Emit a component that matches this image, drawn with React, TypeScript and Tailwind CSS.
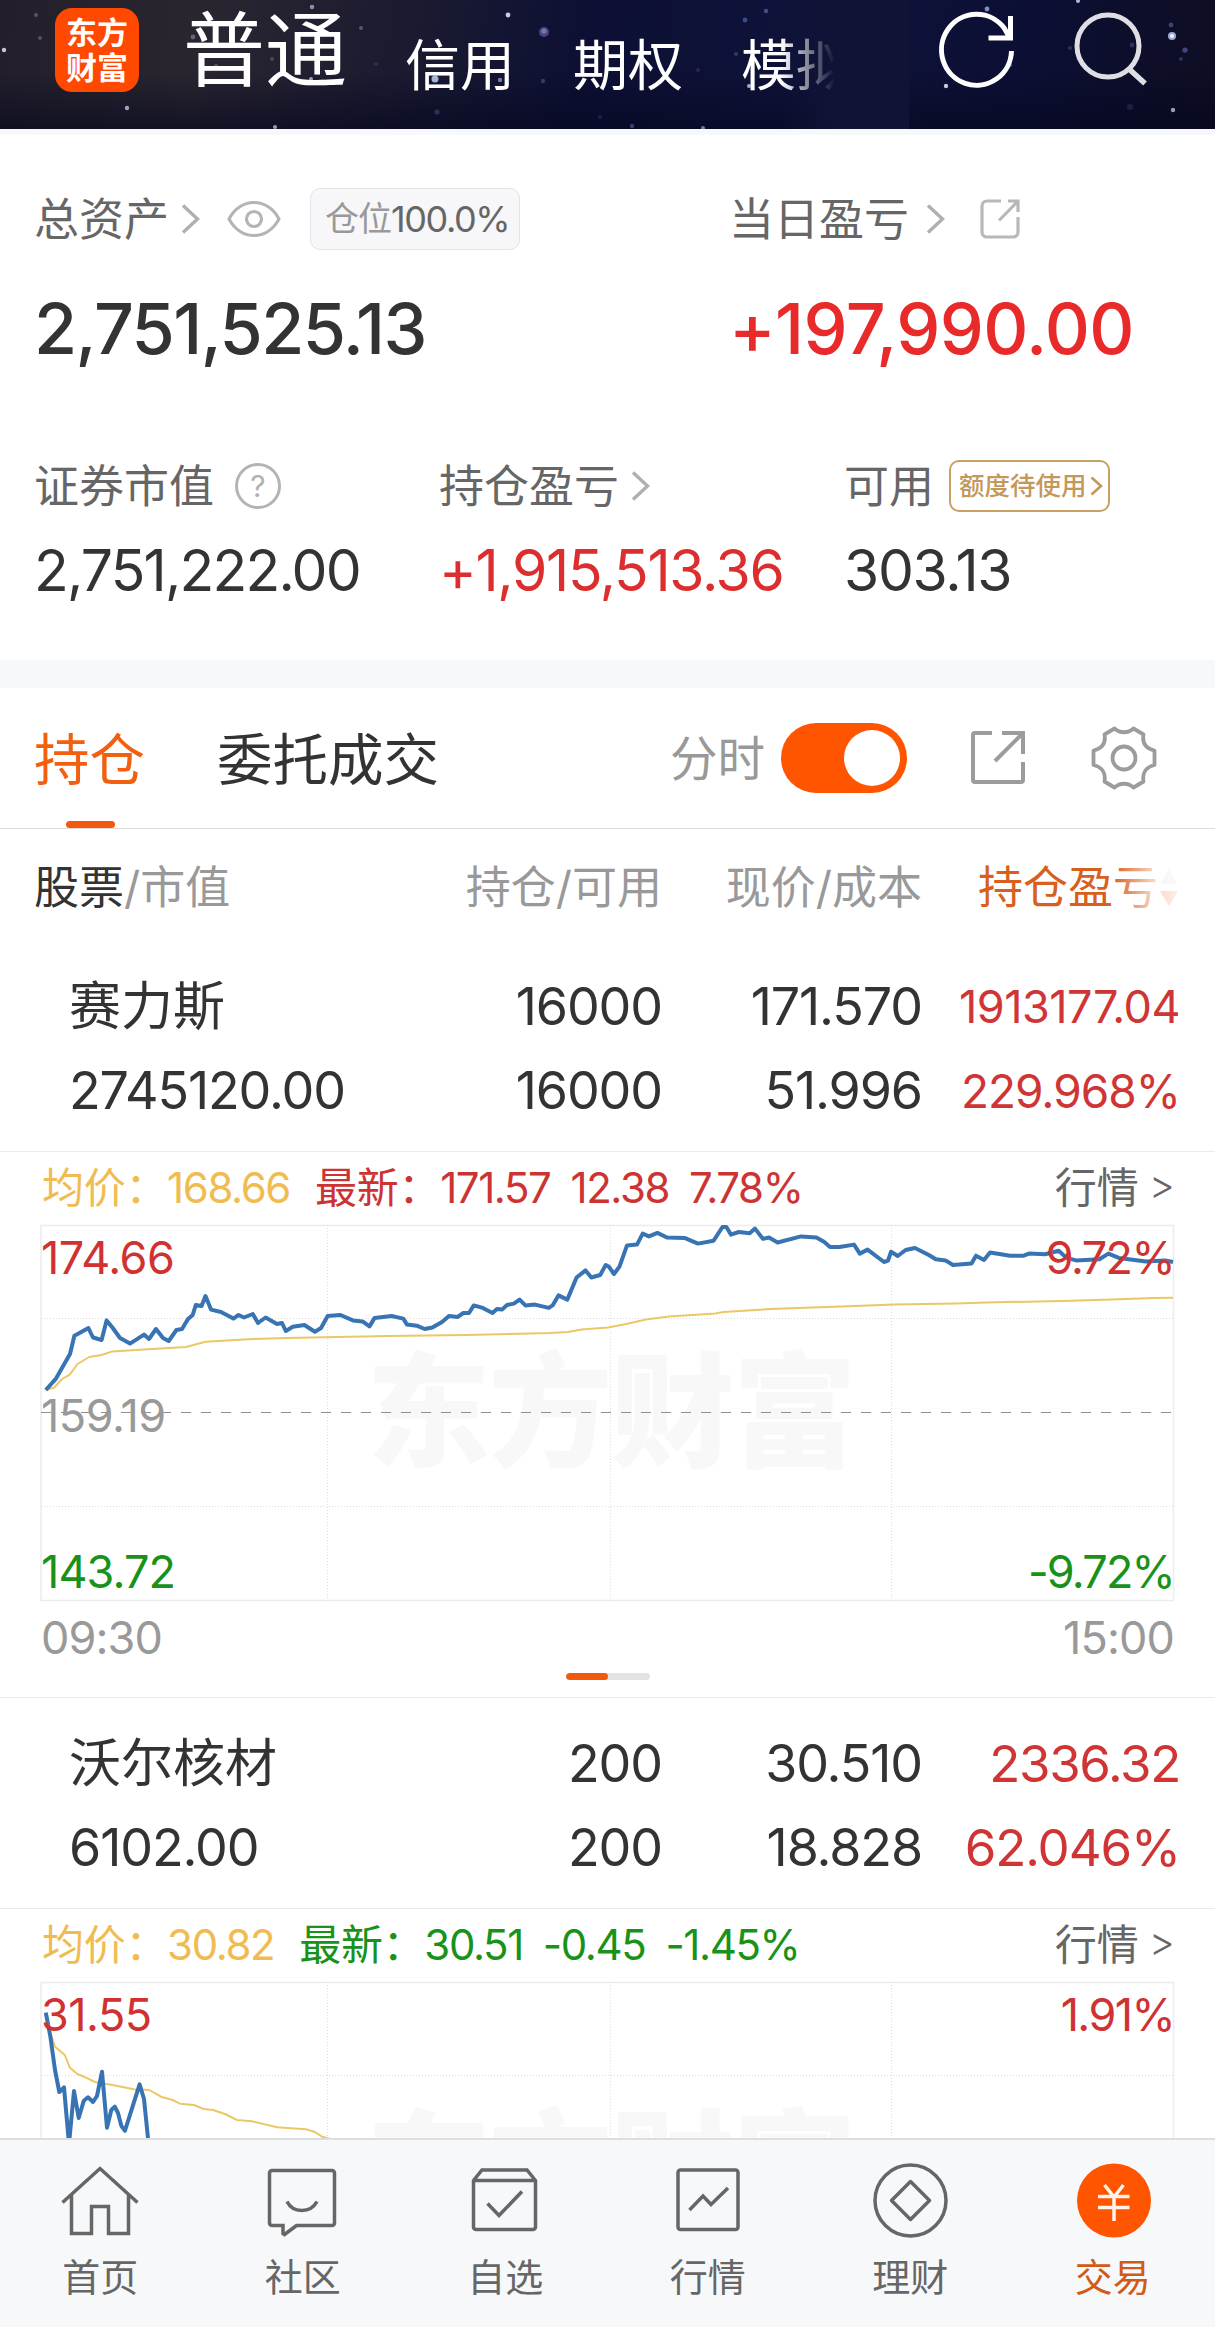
import React from 'react';

type Point = [number, number];

const STARS: [number, number, number, string][] = [
  [312, 7, 2.2, '#b79ac0'], [508, 15, 2.4, '#e8edff'], [544, 32, 5, '#5b4a8c'], [544, 31, 2.6, '#8a78bd'],
  [361, 28, 2, '#6d5b78'], [4, 50, 2.2, '#dfe4f5'], [36, 15, 2, '#5b5f80'], [40, 38, 2, '#55587a'],
  [127, 108, 2.2, '#a9bde8'], [275, 127, 2, '#b9b4b4'], [272, 59, 2, '#5a4a6a'], [435, 79, 3.5, '#bcd0f5'],
  [500, 80, 2.2, '#8190c4'], [376, 64, 2, '#2d3163'], [543, 81, 2.2, '#3c3f75'], [437, 112, 2.6, '#2b3566'],
  [311, 79, 2, '#b9b9cf'], [193, 37, 2.4, '#7a6b88'], [216, 66, 2, '#6f5775'], [766, 11, 2.2, '#4a5a98'],
  [745, 20, 2.4, '#3c5a9c'], [736, 54, 2, '#3b3d78'], [749, 86, 2, '#b7c8ee'], [698, 70, 2, '#282b60'],
  [632, 126, 2.2, '#3b4a7d'], [703, 128, 2, '#8d8f9c'], [987, 9, 2.4, '#8ea5e0'], [946, 86, 2.2, '#e4eaff'],
  [1078, 1, 2, '#c9d4ff'], [1010, 65, 2, '#4b6bb0'], [1172, 36, 4, '#b9c4f5'], [1172, 36, 2, '#ffffff'],
  [1171, 25, 2.4, '#474b80'], [1185, 50, 2.6, '#4e5290'], [1181, 59, 2, '#35386c'], [1173, 110, 2.2, '#b6bac4'],
  [1130, 107, 3, '#1c2550'], [1070, 48, 2, '#34376e'], [1132, 45, 2.4, '#3a3568'], [600, 117, 2, '#1d2756'],
];

const PRICE_1: Point[] = [
  [4.8, 165], [15, 153.6], [29, 129], [33.4, 110.7], [38.5, 108], [47.4, 103], [52, 112.5], [60.6, 115], [65.6, 95.4],
  [71.4, 102.5], [79, 113], [89, 118.6], [103, 109.6], [108, 114], [115, 104], [122, 113], [127.7, 116], [135.4, 105],
  [141, 104], [147, 94], [151.7, 90], [154.8, 80], [160.6, 81], [164.5, 71], [170, 84.6], [180, 87], [192.4, 93.6],
  [197.5, 90], [203, 92.5], [211.8, 89], [217, 98], [224.6, 92.5], [236, 99], [241, 98], [244.8, 106], [251.8, 101.8],
  [263.4, 100], [273.9, 106.8], [280, 103], [286.7, 91], [299.4, 90], [311.9, 95.4], [321.5, 96.4], [328.5, 101.4],
  [333.6, 92.9], [350.6, 91], [362.3, 93.6], [366, 99.6], [375.8, 100.7], [383.6, 104], [391.3, 102.5], [401, 97],
  [408, 91], [416.5, 92], [422.4, 88], [428, 88], [432.8, 80.4], [441.8, 82.9], [451.5, 88], [456, 84], [461, 84.6],
  [466, 80], [472.8, 78.6], [478.6, 74.6], [484.4, 80.4], [494, 79.6], [507.7, 82.9], [511.6, 80.4], [517.4, 70.4],
  [526.3, 74.6], [535.6, 52.5], [544.5, 45.4], [550.3, 52.5], [559.2, 50], [564.7, 40], [568, 41.8], [573, 49],
  [578.4, 41.8], [586, 20.4], [596, 19.6], [601.7, 8.6], [607.9, 11.4], [616.4, 7.9], [626, 12.5], [643.5, 12.9],
  [657, 18.6], [672.6, 15.7], [681.5, 2], [685.4, 2], [690, 9.6], [697.8, 7], [708.7, 8.2], [714, 3.6],
  [721.9, 13.9], [728, 12.5], [736.6, 17.5], [760, 11.4], [775.4, 12.5], [783, 16.8], [789, 22], [798.6, 22],
  [813, 19.6], [818.8, 28.6], [826.6, 24.6], [843, 37], [847, 35.7], [850, 26.8], [856.8, 31], [864.6, 25],
  [874, 23], [887.8, 30], [894.8, 34.3], [904.5, 35.4], [912, 40], [930.5, 38.6], [935, 30.7], [943, 35],
  [949, 27.5], [969, 30.7], [982.8, 30.7], [987.9, 28.6], [1004, 29.3], [1017.7, 25.7], [1025.5, 32.9],
  [1035, 35.4], [1058.4, 34.3], [1067.4, 28.6], [1077.8, 32.9], [1105, 36.4], [1124, 35.4], [1132, 37],
];

const AVERAGE_1: Point[] = [
  [5, 165], [13.3, 162.5], [21, 154], [28.8, 149.6], [36.5, 139], [48.2, 132], [60.6, 130], [71.4, 126.4], [94.7, 125],
  [145, 122], [164.5, 116.8], [207, 114.3], [246, 112.9], [346.7, 111], [424.3, 110], [509.6, 108], [527, 107],
  [540.6, 104.6], [567, 102.5], [585.4, 99], [604.8, 94.6], [628, 91.4], [674.6, 88.6], [682.3, 87], [728.9, 84],
  [814, 81], [853, 79.6], [915, 78.6], [946, 77.5], [1031, 75.7], [1077.8, 74.3], [1112.7, 72.9], [1132, 72.7],
];

const PRICE_2: Point[] = [
  [4.8, 30.7], [9.4, 54.7], [14, 88], [18.3, 110], [23, 105.3], [28, 162], [33, 109], [37.7, 136], [42.8, 118.7],
  [47, 115.3], [52, 120], [56, 114], [61, 89.7], [66, 145.7], [70.3, 128], [73.8, 124.7], [77, 131], [80.4, 144],
  [84, 148.7], [98.6, 102.3], [103, 117], [107.5, 161],
];

const AVERAGE_2: Point[] = [
  [5, 31], [9.4, 51], [14, 64.7], [23.8, 73], [28.8, 85.7], [36.5, 92], [45, 95.7], [54, 100], [71.4, 103],
  [92.8, 107.3], [108.3, 108], [120, 114.7], [131.5, 118], [139, 121.7], [153, 123], [162.6, 127], [172, 128],
  [184, 132], [196, 138], [211, 139.3], [236, 145.3], [265, 147.3], [273.9, 150], [281, 154.7], [290.5, 157.3], [310, 161],
];

const toPoints = (pts: Point[]) => pts.map((p) => p.join(',')).join(' ');

function Chevron({ className = '' }: { className?: string }) {
  return (
    <svg className={className} width="20" height="30" viewBox="0 0 20 30" fill="none" stroke="#b0b0b0" strokeWidth="3.4">
      <path d="M2 1.5 16.5 15 2 28.5" />
    </svg>
  );
}

function Header() {
  return (
    <header className="relative flex h-[129px] overflow-hidden bg-[linear-gradient(180deg,rgba(4,6,30,0)_55%,rgba(4,6,30,0.6)_100%),linear-gradient(100deg,#221f2b_0%,#2a2630_17%,#1a1a30_34%,#0d1034_48%,#10133a_68%,#0c0f33_85%,#0e0d22_100%)] text-white">
      <svg className="absolute inset-0" width="1215" height="129" viewBox="0 0 1215 129">
        {STARS.map(([x, y, r, c], i) => (
          <circle key={i} cx={x} cy={y} r={r} fill={c} opacity="0.85" />
        ))}
      </svg>
      <div className="relative ml-[55px] mt-2 flex h-[84px] w-[84px] flex-col items-center justify-center rounded-[17px] bg-[#ff4800] text-[31px] leading-[35px] font-bold">
        <span>东方</span>
        <span>财富</span>
      </div>
      <nav className="relative flex w-[770px] whitespace-nowrap">
        <span className="ml-[44px] mt-[9px] text-[82px] leading-[84px]">普通</span>
        <span className="ml-[58px] mt-[37px] text-[55px] leading-[56px]">信用</span>
        <span className="ml-[58px] mt-[37px] text-[55px] leading-[56px]">期权</span>
        <span className="ml-[58px] mt-[37px] text-[55px] leading-[56px]">模拟</span>
        <div className="absolute inset-y-0 right-0 w-[128px] bg-linear-to-r from-[#10133500] from-0% via-[#101335] via-42% to-[#101335]" />
      </nav>
      <svg className="relative ml-[28px]" width="278" height="129" viewBox="935 0 278 129" fill="none">
        <path d="M1009.5 51a35 35.5 0 1 1-7-22.5l5 9" stroke="#fff" strokeWidth="5" />
        <path d="M1008.5 16v22h-22" stroke="#fff" strokeWidth="5" />
        <circle cx="1106" cy="46" r="31" stroke="#dedee4" strokeWidth="5" />
        <path d="M1126.5 68.5 1143 83.5" stroke="#dedee4" strokeWidth="5.5" />
      </svg>
    </header>
  );
}

function Account() {
  return (
    <section className="h-[531px] border-t-[6px] border-[#f7f8fc] bg-white pt-[53px] pl-[34px]">
      <div className="grid grid-cols-[695px_1fr]">
        <div>
          <div className="flex h-[62px] items-center text-[45px] leading-none text-[#666]">
            <span>总资产</span>
            <Chevron className="ml-[12px]" />
            <svg className="ml-[26px]" width="54" height="38" viewBox="0 0 54 38" fill="none" stroke="#b4b4b4" strokeWidth="3.2">
              <path d="M2 19C14-3 40-3 52 19 40 41 14 41 2 19Z" strokeLinejoin="round" />
              <circle cx="27" cy="19" r="7.5" />
            </svg>
            <div className="ml-[29px] flex h-[62px] w-[210px] items-center rounded-[10px] border border-[#e3e4e8] bg-[#f7f7fa] pl-[14px]">
              <span className="text-[34px] tracking-[-1px] text-[#999]">仓位</span>
              <span className="text-[36px] tracking-[-1.4px]">100.0%</span>
            </div>
          </div>
          <div className="mt-[39px] text-[70px] leading-[80px] font-medium tracking-[-1.6px] text-[#333]">2,751,525.13</div>
        </div>
        <div>
          <div className="flex h-[62px] items-center text-[45px] leading-none text-[#666]">
            <span>当日盈亏</span>
            <Chevron className="ml-[17px]" />
            <svg className="ml-[33px]" width="42" height="42" viewBox="0 0 42 42" fill="none" stroke="#b8b8b8" strokeWidth="3.2">
              <path d="M22 3H8a5 5 0 0 0-5 5v26a5 5 0 0 0 5 5h26a5 5 0 0 0 5-5V19" />
              <path d="M29 3h10v11M39 3 20 22.5" />
            </svg>
          </div>
          <div className="mt-[39px] text-[70px] leading-[80px] font-medium tracking-[-0.6px] text-[#e92a2a]">+197,990.00</div>
        </div>
      </div>
      <div className="mt-[91px] grid grid-cols-[405px_405px_1fr]">
        <div>
          <div className="flex h-[52px] items-center text-[45px] leading-none text-[#666]">
            <span>证券市值</span>
            <span className="ml-[21px] flex h-[46px] w-[46px] items-center justify-center rounded-full border-[3px] border-[#b4b4b4] text-[30px] text-[#b0b0b0]">?</span>
          </div>
          <div className="mt-[29px] text-[57px] leading-[60px] tracking-[-1.8px] text-[#333]">2,751,222.00</div>
        </div>
        <div>
          <div className="flex h-[52px] items-center text-[45px] leading-none text-[#666]">
            <span>持仓盈亏</span>
            <Chevron className="ml-[12px]" />
          </div>
          <div className="mt-[29px] text-[57px] leading-[60px] tracking-[-1.3px] text-[#dc2e2e]">+1,915,513.36</div>
        </div>
        <div>
          <div className="flex h-[52px] items-center text-[45px] leading-none text-[#666]">
            <span>可用</span>
            <div className="ml-[15px] flex h-[52px] w-[161px] items-center rounded-[10px] border-2 border-[#c9a063] pl-[8px] text-[#c4975a]">
              <span className="text-[25.5px] font-medium">额度待使用</span>
              <svg className="ml-[3px]" width="13" height="20" viewBox="0 0 13 20" fill="none" stroke="#c4975a" strokeWidth="2.6">
                <path d="M1.5 1.5 11 10l-9.5 8.5" />
              </svg>
            </div>
          </div>
          <div className="mt-[29px] text-[57px] leading-[60px] tracking-[-1.3px] text-[#333]">303.13</div>
        </div>
      </div>
    </section>
  );
}

function Tabs() {
  return (
    <div className="flex h-[141px] items-center border-b border-[#dcdcdc] bg-white pl-[34px] text-[55.5px] leading-none">
      <div className="relative flex h-full items-center pt-[3px] text-[#f2600f]">
        持仓
        <span className="absolute bottom-0 left-[32px] h-[7px] w-[49px] rounded-full bg-[#f2590c]" />
      </div>
      <span className="ml-[72px] pt-[3px] text-[#333]">委托成交</span>
      <span className="ml-[231px] pt-[2px] text-[47.5px] text-[#999]">分时</span>
      <div className="ml-[16px] flex h-[70px] w-[126px] items-center justify-end rounded-full bg-[#ff5500] pr-[7px]">
        <span className="h-[56px] w-[56px] rounded-full bg-white" />
      </div>
      <svg className="ml-[63px]" width="56" height="56" viewBox="0 0 56 56" fill="none" stroke="#9c9c9c" strokeWidth="4">
        <path d="M22 3H5a2 2 0 0 0-2 2v45a2 2 0 0 0 2 2h46a2 2 0 0 0 2-2V32" />
        <path d="M32 3h21v21M53 3 25 31" />
      </svg>
      <svg className="ml-[65px]" width="66" height="66" viewBox="0 0 66 66" fill="none" stroke="#9c9c9c" strokeWidth="3.8" strokeLinejoin="round">
        <path d="M23.500 3.500C29 8.500 37 8.500 42.500 3.500L52.500 9.500C51 18 55 23.500 63.500 25.500V40C55 42 51 48 52.500 56.500L42.500 62.500C37 57.500 29 57.500 23.500 62.500L13.500 56.500C15 48 11 42 2.500 40V25.500C11 23.500 15 18 13.500 9.500Z" />
        <circle cx="33" cy="33" r="11.5" />
      </svg>
    </div>
  );
}

function TableHead() {
  return (
    <div className="relative grid h-[116px] grid-cols-[366px_262px_260px_1fr] items-center bg-white pl-[34px] text-[45px] leading-none whitespace-nowrap text-[#999]">
      <span>
        <span className="text-[#333]">股票</span>/市值
      </span>
      <span className="text-right">持仓/可用</span>
      <span className="text-right">现价/成本</span>
      <span className="flex items-center pl-[56px] text-[#d95f1c]">
        持仓盈亏
        <svg className="ml-[1px]" width="20" height="40" viewBox="0 0 20 40">
          <path d="M10 2 19 17H1Z" fill="#d8d8d8" />
          <path d="M10 39 1 24h18Z" fill="#f2590c" />
        </svg>
      </span>
      <div className="absolute inset-y-0 right-[20px] w-[82px] bg-linear-to-r from-white/0 via-white/75 via-50% to-white" />
    </div>
  );
}

interface Holding {
  name: string; value: string; qty: string; usable: string; price: string; cost: string; profit: string; rate: string; small?: boolean;
}

function HoldingRows({ h, className }: { h: Holding; className: string }) {
  return (
    <div className={`border-b border-[#ebebeb] bg-white pl-[69px] text-[52px] leading-[84px] tracking-[-1.1px] whitespace-nowrap text-[#333] ${className}`}>
      <div className="grid h-[84px] grid-cols-[332px_261px_260px_258px] text-right">
        <span className="text-left tracking-normal">{h.name}</span>
        <span>{h.qty}</span>
        <span>{h.price}</span>
        <span className={h.small ? 'text-[45px] tracking-[-0.5px] text-[#d03535]' : 'text-[51px] tracking-[-1.3px] text-[#d03535]'}>{h.profit}</span>
      </div>
      <div className="grid h-[84px] grid-cols-[332px_261px_260px_258px] text-right">
        <span className="text-left">{h.value}</span>
        <span>{h.usable}</span>
        <span>{h.cost}</span>
        <span className={h.small ? 'text-[46px] tracking-[-1px] text-[#d03535]' : 'text-[51px] text-[#d03535]'}>{h.rate}</span>
      </div>
    </div>
  );
}

function Quote({ avg, last, tone }: { avg: string; last: string[]; tone: string }) {
  return (
    <div className="flex h-[73px] items-center bg-white pb-[2px] pl-[42px] text-[42px] leading-none tracking-[-1.4px] whitespace-nowrap">
      <span className="tracking-[-0.3px] text-[#f0bc52]">均价：</span>
      <span className="text-[#f0bc52]">{avg}</span>
      <span className={`ml-[25px] flex ${tone}`}>
        <span className="tracking-[-0.3px]">最新：</span>
        {last.map((t, i) => (
          <span key={t} className={i ? 'ml-[20px]' : ''}>{t}</span>
        ))}
      </span>
      <span className="mr-[40px] ml-auto flex tracking-normal text-[#666]">
        行情<span className="ml-[10px] -mt-[2px] text-[40px] font-light">&gt;</span>
      </span>
    </div>
  );
}

interface ChartProps {
  price: Point[]; average: Point[]; high: string; highPct: string; mid?: string; low?: string; lowPct?: string;
}

function Chart({ price, average, high, highPct, mid, low, lowPct }: ChartProps) {
  return (
    <div className="relative mx-[41px] h-[376px] w-[1133px] bg-white text-[45px] leading-none tracking-[-0.5px]">
      <div className="absolute inset-x-0 top-[121px] pl-[6px] text-center text-[124px] leading-[132px] font-black tracking-[-2px] text-[#f8f8f8]">东方财富</div>
      <svg className="absolute inset-0 overflow-visible" width="1133" height="376" viewBox="0 0 1133 376" fill="none">
        <rect x="0" y="0.5" width="1132.5" height="375" stroke="#ececec" strokeWidth="1.5" />
        <path d="M286.5 0V376M569.5 0V376M850.5 0V376M0 93.5H1133M0 281.5H1133" stroke="#dedede" strokeDasharray="1 2" />
        <path d="M0 187.5H1133" stroke="#8f8f8f" strokeDasharray="10 10" />
        <polyline points={toPoints(average)} stroke="#ecc766" strokeWidth="2" strokeLinejoin="round" />
        <polyline points={toPoints(price)} stroke="#3873b3" strokeWidth="4" strokeLinejoin="round" />
      </svg>
      <div className="absolute inset-x-0 top-[10px] bottom-[7px] flex flex-col justify-between">
        <div className="flex justify-between text-[#d03232]">
          <span>{high}</span>
          <span className="tracking-[-1.6px]">{highPct}</span>
        </div>
        <div className="mt-[1px] text-[#999]">{mid}</div>
        <div className="flex justify-between text-[#189218]">
          <span className="tracking-[-0.9px]">{low}</span>
          <span className="tracking-[-1.8px]">{lowPct}</span>
        </div>
      </div>
    </div>
  );
}

const NAV: { label: string; icon: React.ReactNode; active?: boolean }[] = [
  { label: '首页', icon: <path d="M3.500 44.500 41 10.500 78.500 44.500M12.500 37v38.500h20V48.500h17v27h20V37" /> },
  { label: '社区', icon: <><path d="M10 12.500h60a2.500 2.500 0 0 1 2.500 2.500v50a2.500 2.500 0 0 1-2.500 2.500H34.500l-12 9-1.500-1V67.500H10A2.500 2.500 0 0 1 7.500 65V15a2.500 2.500 0 0 1 2.500-2.500Z" /><path d="M25 43.500c6 12 23.500 12 30 0" /></> },
  { label: '自选', icon: <><path d="M9.500 22.500 18 12h45l8.500 10.500V69a2.500 2.500 0 0 1-2.500 2.500H12A2.500 2.500 0 0 1 9.500 69ZM9.500 22.500h62" /><path d="M23.500 45.500 35 57.500l23-24" /></> },
  { label: '行情', icon: <><rect x="11" y="12" width="60" height="59.5" rx="2.5" /><path d="M22.500 52 36 38l8 8.500 17-16.500" /></> },
  { label: '理财', icon: <><circle cx="41.5" cy="42.5" r="35.5" /><path d="M41.500 23.500 60.500 42.500 41.500 61.500 22.500 42.500Z" strokeLinejoin="round" /></> },
  { label: '交易', active: true, icon: <><circle cx="42" cy="42.5" r="37" fill="#ff5500" stroke="none" /><path d="M32.500 27l9.500 12L51.500 27M26 38.500h31.500M26 49.500h31.500M42 38v25" stroke="#fff3ea" /></> },
];

function BottomNav() {
  return (
    <nav className="grid h-[189px] shrink-0 grid-cols-6 border-t-2 border-[#dedede] bg-[#f7f8fa]">
      {NAV.map((n) => (
        <div key={n.label} className="flex flex-col items-center pt-[18px] text-[38px] leading-none text-[#666]">
          <svg width="84" height="84" viewBox="0 0 84 84" fill="none" stroke="#666" strokeWidth="3.5">
            {n.icon}
          </svg>
          <span className={n.active ? 'mt-[16px] pr-[2px] text-[#d25a17]' : 'mt-[16px] pr-[2px]'}>{n.label}</span>
        </div>
      ))}
    </nav>
  );
}

export default function App() {
  return (
    <div className="flex h-[2327px] w-[1215px] flex-col overflow-hidden bg-white font-[Inter,'Noto_Sans_CJK_SC',sans-serif]">
      <main className="h-[2138px] shrink-0 overflow-hidden">
        <Header />
        <Account />
        <div className="h-[28px] bg-[#f7f8fa]" />
        <Tabs />
        <TableHead />
        <HoldingRows
          className="h-[207px] pt-[20px]"
          h={{ name: '赛力斯', value: '2745120.00', qty: '16000', usable: '16000', price: '171.570', cost: '51.996', profit: '1913177.04', rate: '229.968%', small: true }}
        />
        <Quote avg="168.66" last={['171.57', '12.38', '7.78%']} tone="text-[#cc3434]" />
        <Chart price={PRICE_1} average={AVERAGE_1} high="174.66" highPct="9.72%" mid="159.19" low="143.72" lowPct="-9.72%" />
        <div className="flex h-[72px] items-center justify-between px-[41px] text-[45px] leading-none tracking-[-0.9px] text-[#999]">
          <span>09:30</span>
          <span>15:00</span>
        </div>
        <div className="flex h-[25px] justify-center border-b border-[#ebebeb]">
          <div className="flex h-[7px] w-[84px] overflow-hidden rounded-full bg-[#e3e3e3]">
            <span className="h-full w-[42px] rounded-full bg-[#f2590c]" />
          </div>
        </div>
        <HoldingRows
          className="h-[211px] pt-[24px]"
          h={{ name: '沃尔核材', value: '6102.00', qty: '200', usable: '200', price: '30.510', cost: '18.828', profit: '2336.32', rate: '62.046%' }}
        />
        <Quote avg="30.82" last={['30.51', '-0.45', '-1.45%']} tone="text-[#189218]" />
        <Chart price={PRICE_2} average={AVERAGE_2} high="31.55" highPct="1.91%" />
      </main>
      <BottomNav />
    </div>
  );
}
